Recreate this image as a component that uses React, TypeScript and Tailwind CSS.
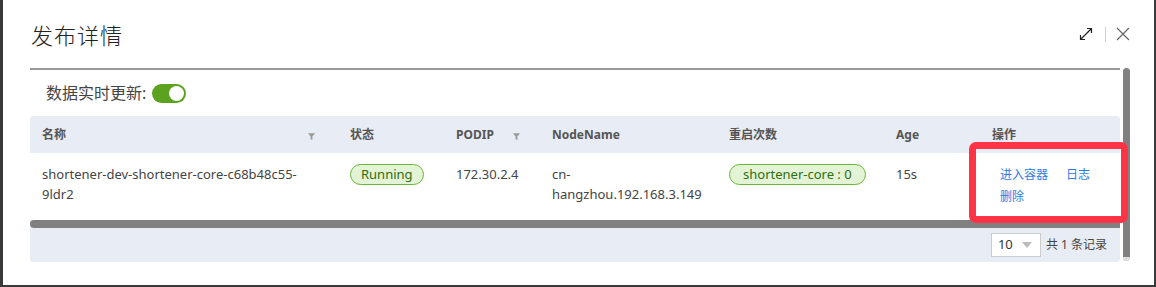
import React from "react";

const FONT = '"Noto Sans", "Noto Sans CJK SC", sans-serif';

function FilterIcon() {
  return (
    <svg width="9" height="9" viewBox="0 0 10 10" className="inline-block">
      <path d="M1 1.5h8L6 5v4L4 8V5z" fill="#9a9a9a" />
    </svg>
  );
}

export default function App() {
  return (
    <div className="w-[1156px] h-[287px] bg-[#3a3a3a] pl-[3px] pb-[2px] pr-[2px] overflow-hidden" style={{ fontFamily: FONT }}>
      <div className="relative w-full h-full bg-white flex flex-col">
        <div className="flex items-center h-[68px] pl-[28px] pr-[24px]">
          <div className="text-[22px] font-light text-[#222] tracking-[1px] leading-none pt-[1px]">发布详情</div>
          <div className="ml-auto flex items-center">
            <svg width="14" height="14" viewBox="0 0 14 14" className="mr-[12px]">
              <path d="M8 1.5h4.5V6M12.5 1.5L1.5 12.5M1.5 8v4.5H6" fill="none" stroke="#222" strokeWidth="1.2" />
            </svg>
            <div className="w-px h-[15px] bg-[#ccc] mr-[10px]" />
            <svg width="14" height="14" viewBox="0 0 14 14">
              <path d="M1 1L13 13M13 1L1 13" stroke="#666" strokeWidth="1.2" />
            </svg>
          </div>
        </div>
        <div className="flex ml-[27px] mr-[24px]">
          <div className="w-[1090px] border-t-[2px] border-[#999] flex flex-col">
            <div className="flex items-center h-[46px] pl-[16px]">
              <span className="text-[16px] text-[#444] mr-[6px]">数据实时更新:</span>
              <div className="w-[34px] h-[19px] rounded-full bg-[#5aa21f] relative">
                <div className="absolute right-[2px] top-[2px] w-[15px] h-[15px] rounded-full bg-white" />
              </div>
            </div>
            <div className="rounded-[3px] overflow-hidden bg-[#e8ecf4]">
              <div className="grid grid-cols-[308px_106px_96px_177px_167px_96px_140px] h-[37px] items-center text-[12px] font-bold text-[#555]">
                <div className="pl-[12px] flex items-center pr-[22px]"><span>名称</span><span className="ml-auto mt-[3px]"><FilterIcon /></span></div>
                <div className="pl-[12px]">状态</div>
                <div className="pl-[12px] flex items-center"><span>PODIP</span><span className="ml-[18px] mt-[3px]"><FilterIcon /></span></div>
                <div className="pl-[12px]">NodeName</div>
                <div className="pl-[12px]">重启次数</div>
                <div className="pl-[12px]">Age</div>
                <div className="pl-[12px]">操作</div>
              </div>
              <div className="grid grid-cols-[308px_106px_96px_177px_167px_96px_140px] h-[67px] bg-white text-[13px] text-[#444] leading-[20px] pt-[11px]">
                <div className="pl-[12px] pr-[8px]">shortener-dev-shortener-core-c68b48c55-<br />9ldr2</div>
                <div className="pl-[12px]">
                  <span className="inline-block mt-[-1px] h-[21px] leading-[19px] px-[10px] rounded-full border border-[#6bb536] bg-[#e3f3d6] text-[#2f6e0e] text-[13px]">Running</span>
                </div>
                <div className="pl-[12px]">172.30.2.4</div>
                <div className="pl-[12px] pr-[8px]">cn-<br />hangzhou.192.168.3.149</div>
                <div className="pl-[12px]">
                  <span className="inline-block mt-[-1px] h-[21px] leading-[19px] px-[13px] rounded-full border border-[#6bb536] bg-[#e3f3d6] text-[#2f6e0e] text-[13px] whitespace-nowrap">shortener-core : 0</span>
                </div>
                <div className="pl-[12px]">15s</div>
                <div className="pl-[20px] text-[12px] text-[#2d7be0] leading-[22px]">
                  <div className="flex"><span className="w-[66px]">进入容器</span><span>日志</span></div>
                  <div>删除</div>
                </div>
              </div>
              <div className="h-[8px] bg-[#808080] rounded-l-full" />
              <div className="h-[34px] flex items-center justify-end pr-[13px]">
                <div className="w-[50px] h-[24px] bg-white border border-[#ccc] flex items-center pl-[6px] text-[13px] text-[#333]">
                  <span>10</span>
                  <svg width="10" height="6" viewBox="0 0 10 6" className="ml-auto mr-[8px]"><path d="M0 0h10L5 6z" fill="#bbb" /></svg>
                </div>
                <span className="ml-[5px] text-[12px] text-[#444]">共 1 条记录</span>
              </div>
            </div>
          </div>
          <div className="ml-[3px] w-[8px] h-[193px] bg-[#808080] rounded-t-[4px] rounded-b-[2px] border-b-[4px] border-[#ddd]" />
        </div>
        <div className="absolute left-[966px] top-[142px] w-[159px] h-[81px] border-[7px] border-[#fd3445] rounded-[7px]" />
      </div>
    </div>
  );
}
